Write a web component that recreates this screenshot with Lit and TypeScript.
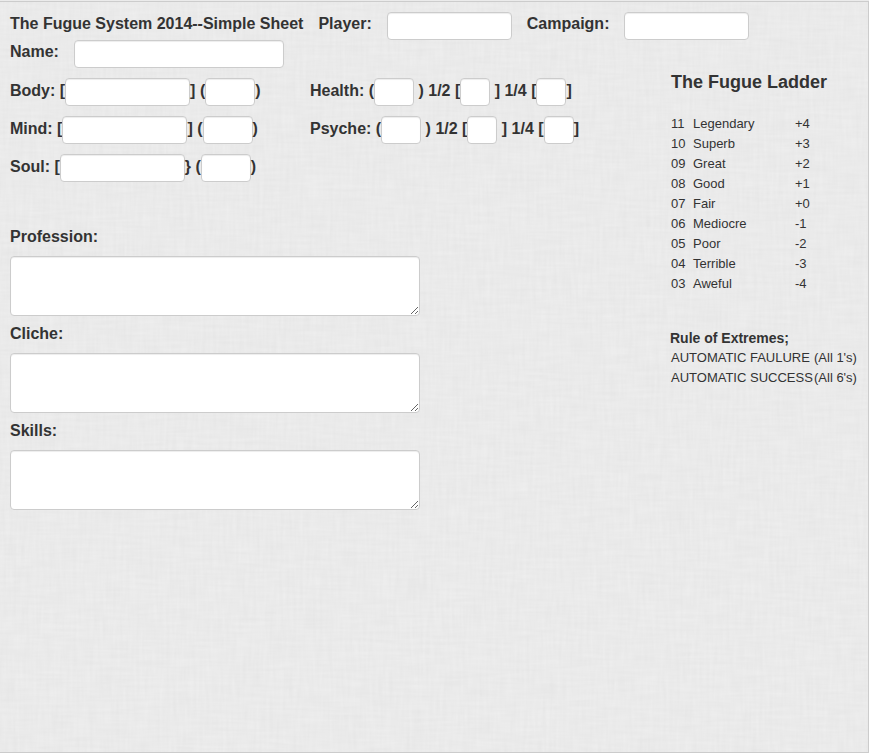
import { LitElement, html, css } from "lit";
import { customElement } from "lit/decorators.js";

const LADDER = [
  ["11", "Legendary", "+4"],
  ["10", "Superb", "+3"],
  ["09", "Great", "+2"],
  ["08", "Good", "+1"],
  ["07", "Fair", "+0"],
  ["06", "Mediocre", "-1"],
  ["05", "Poor", "-2"],
  ["04", "Terrible", "-3"],
  ["03", "Aweful", "-4"],
];

const EXTREMES = [
  ["AUTOMATIC FAULURE", "(All 1's)"],
  ["AUTOMATIC SUCCESS", "(All 6's)"],
];

const ATTRIBUTES = [
  { name: "Body", close: "] (" },
  { name: "Mind", close: "] (" },
  { name: "Soul", close: "} (" },
];

const POOLS = ["Health", "Psyche"];
const NOTES = ["Profession", "Cliche", "Skills"];

@customElement("app-root")
export class AppRoot extends LitElement {
  static styles = css`
    :host {
      display: block;
      padding-top: 1px;
      color: #333;
      font-family: "Liberation Sans", Arial, sans-serif;
      font-size: 13px;
      line-height: 20px;
      background: #ebebeb;
    }
    * {
      box-sizing: border-box;
    }
    .sheet {
      position: relative;
      isolation: isolate;
      min-height: calc(100vh - 1px);
      padding: 10px;
      border: 1px solid #ccc;
      border-left: 0;
    }
    .linen {
      position: absolute;
      inset: 0;
      z-index: -1;
      width: 100%;
      height: 100%;
    }
    .row {
      display: flex;
      align-items: flex-start;
      font-size: 16px;
      font-weight: bold;
      line-height: 24px;
      white-space: pre;
    }
    .spaced {
      gap: 15px;
    }
    .title {
      margin: 0;
      font-size: 16px;
      line-height: 24px;
    }
    input,
    textarea {
      display: block;
      margin: 0;
      padding: 4px 6px;
      border: 1px solid #ccc;
      border-radius: 4px;
      background: #fff;
      box-shadow: inset 0 1px 1px rgba(0, 0, 0, 0.075);
      color: #555;
      font: inherit;
      font-size: 14px;
      font-weight: normal;
    }
    input {
      height: 28px;
    }
    .w210 {
      width: 210px;
    }
    .w125 {
      width: 125px;
    }
    .w50 {
      width: 50px;
    }
    .w40 {
      width: 40px;
    }
    .w30 {
      width: 30px;
    }
    .columns {
      display: grid;
      grid-template-columns: minmax(0, 1fr) 188px;
      column-gap: 20px;
    }
    .stats {
      display: grid;
      grid-template-columns: 300px 1fr;
      padding-top: 10px;
    }
    .stats .row {
      line-height: 26px;
    }
    .stack {
      display: flex;
      flex-direction: column;
      gap: 10px;
    }
    .notes {
      padding-top: 42px;
    }
    .note {
      display: flex;
      flex-direction: column;
      gap: 6px;
      max-width: 410px;
      margin-bottom: 5px;
      font-size: 16px;
      font-weight: bold;
      line-height: 26px;
    }
    textarea {
      width: 100%;
      height: 60px;
      resize: both;
    }
    h2 {
      margin: 0 0 0 1px;
      font-size: 18px;
      line-height: 28px;
    }
    table {
      width: 100%;
      border-collapse: collapse;
      white-space: nowrap;
    }
    td {
      padding: 0 0 0 1px;
      height: 20px;
    }
    .ladder {
      margin-top: 18px;
    }
    .rank {
      width: 22px;
    }
    .grade {
      width: 102px;
    }
    h3 {
      margin: 34px 0 0;
      font-size: 14px;
      line-height: 20px;
    }
    .result {
      width: 143px;
    }
  `;

  private attribute(item: { name: string; close: string }) {
    const id = item.name.toLowerCase();
    return html`<div class="row"><label for=${id}>${item.name}: [</label><input class="w125" id=${id} type="text"><span>${item.close}</span><input class="w50" type="text" aria-label="${item.name} value"><span>)</span></div>`;
  }

  private pool(name: string) {
    const id = name.toLowerCase();
    return html`<div class="row"><label for=${id}>${name}: (</label><input class="w40" id=${id} type="text"><label for="${id}-half"> ) 1/2 [</label><input class="w30" id="${id}-half" type="text"><label for="${id}-quarter"> ] 1/4 [</label><input class="w30" id="${id}-quarter" type="text"><span>]</span></div>`;
  }

  render() {
    return html`
      <main class="sheet">
        <svg class="linen" aria-hidden="true">
          <filter id="weave" x="0" y="0" width="100%" height="100%" color-interpolation-filters="sRGB">
            <feTurbulence type="fractalNoise" baseFrequency="0.03 0.3" numOctaves="2" seed="3" result="weft" />
            <feTurbulence type="fractalNoise" baseFrequency="0.3 0.03" numOctaves="2" seed="8" result="warp" />
            <feComposite in="weft" in2="warp" operator="arithmetic" k2="0.5" k3="0.5" />
            <feColorMatrix values="0.05 0 0 0 0.893  0.05 0 0 0 0.893  0.05 0 0 0 0.893  0 0 0 0 1" />
          </filter>
          <rect width="100%" height="100%" filter="url(#weave)" />
        </svg>

        <header>
          <div class="row spaced">
            <h1 class="title">The Fugue System 2014--Simple Sheet</h1>
            <label for="player">Player:</label>
            <input class="w125" id="player" type="text">
            <label for="campaign">Campaign:</label>
            <input class="w125" id="campaign" type="text">
          </div>
          <div class="row spaced">
            <label for="name">Name:</label>
            <input class="w210" id="name" type="text">
          </div>
        </header>

        <div class="columns">
          <div>
            <div class="stats">
              <div class="stack">${ATTRIBUTES.map((a) => this.attribute(a))}</div>
              <div class="stack">${POOLS.map((p) => this.pool(p))}</div>
            </div>
            <div class="notes">
              ${NOTES.map(
                (n) => html`<div class="note">
                  <label for=${n.toLowerCase()}>${n}:</label>
                  <textarea id=${n.toLowerCase()}></textarea>
                </div>`
              )}
            </div>
          </div>

          <aside>
            <h2>The Fugue Ladder</h2>
            <table class="ladder">
              ${LADDER.map(
                ([rank, grade, bonus]) => html`<tr>
                  <td class="rank">${rank}</td>
                  <td class="grade">${grade}</td>
                  <td>${bonus}</td>
                </tr>`
              )}
            </table>
            <h3>Rule of Extremes;</h3>
            <table>
              ${EXTREMES.map(
                ([result, roll]) => html`<tr>
                  <td class="result">${result}</td>
                  <td>${roll}</td>
                </tr>`
              )}
            </table>
          </aside>
        </div>
      </main>
    `;
  }
}
